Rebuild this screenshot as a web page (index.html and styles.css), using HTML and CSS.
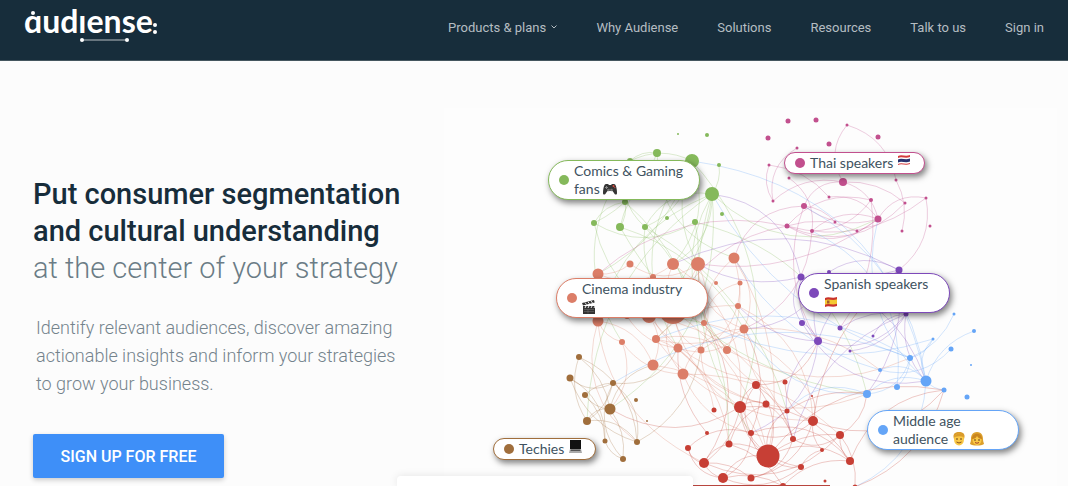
FILE: index.html
```
<!DOCTYPE html>
<html lang="en">

<head>
    <meta charset="UTF-8">
    <meta name="viewport" content="width=device-width, initial-scale=1.0">
    <title>Audiense</title>
    <link rel="stylesheet" href="styles.css">
</head>

<body>
    <header class="header">
        <a class="logo" href="#" aria-label="audiense">
            <svg width="136" height="48" viewBox="0 0 136 48">
                <text class="logo-text" x="0" y="33">ɑudıense</text>
                <circle cx="9" cy="13" r="2" />
                <circle cx="131" cy="25" r="2" />
                <circle cx="131" cy="32" r="2" />
                <path class="logo-line" d="M58 40H103" />
                <circle cx="58" cy="40" r="2" />
                <circle cx="103" cy="40" r="2" />
            </svg>
        </a>
        <nav class="nav">
            <a href="#">Products &amp; plans
                <svg class="chevron" width="6" height="4" viewBox="0 0 6 4"><path d="M.5.5 3 3 5.5.5" /></svg>
            </a>
            <a href="#">Why Audiense</a>
            <a href="#">Solutions</a>
            <a href="#">Resources</a>
            <a href="#">Talk to us</a>
            <a href="#">Sign in</a>
        </nav>
    </header>

    <main class="hero">
        <section class="copy">
            <h1>Put consumer segmentation<br>and cultural understanding<br><span>at the center of your strategy</span></h1>
            <p>Identify relevant audiences, discover amazing<br>actionable insights and inform your strategies<br>to grow your business.</p>
            <button type="button" class="signup">SIGN UP FOR FREE</button>
        </section>

        <section class="graph">
            <svg id="network" class="network" viewBox="444 108 613 378"></svg>

            <div class="tag green comics">
                <span>Comics &amp; Gaming<br>fans
                    <svg class="emoji" viewBox="0 0 14 14">
                        <path fill="#353535" d="M3 2h2l1 1h2l1-1h2c2 0 3 5 3 9 0 2-2 2-3 0L9.500 9h-5L3 11c-1 2-3 2-3 0 0-4 1-9 3-9z" />
                        <path stroke="#888" stroke-width="1" d="M2 5.500h3M3.500 4v3" />
                        <circle cx="5.500" cy="8" r="1.300" fill="#777" /><circle cx="8.500" cy="8" r="1.300" fill="#777" />
                        <circle cx="10.500" cy="4" r="1" fill="#e0483c" /><circle cx="11.800" cy="5.500" r=".8" fill="#a44" />
                    </svg>
                </span>
            </div>
            <div class="tag pink thai">
                <span>Thai speakers
                    <svg class="emoji" viewBox="0 0 14 14">
                        <path fill="#d33a3c" d="M1 2c4-2 7 1 12-1v9c-5 2-8-1-12 1z" />
                        <path fill="#fff" d="M1 4c4-2 7 1 12-1v6c-5 2-8-1-12 1z" />
                        <path fill="#29336f" d="M1 5.500c4-2 7 1 12-1v3c-5 2-8-1-12 1z" />
                    </svg>
                </span>
            </div>
            <div class="tag coral cinema">
                <span>Cinema industry<br>
                    <svg class="emoji" viewBox="0 0 14 14">
                        <path fill="#333" d="M1 6h12v8H1zM0 3l12-3 .7 2.500L1 5.500z" />
                        <path stroke="#eee" stroke-width="1" d="m3 2.500 1.500 2M6 1.800l1.500 2M9 1l1.500 2M3 8l1-2M6 8l1-2M9 8l1-2M12 8l1-2" />
                        <path stroke="#777" stroke-width=".5" d="M2 9.500h10M2 11.500h10M6 9.500v4" />
                    </svg>
                </span>
            </div>
            <div class="tag purple spanish">
                <span>Spanish speakers<br>
                    <svg class="emoji" viewBox="0 0 14 14">
                        <path fill="#c9332c" d="M1 3c4-2 7 1 12-1v9c-5 2-8-1-12 1z" />
                        <path fill="#f4c932" d="M1 5.200c4-2 7 1 12-1v4.600c-5 2-8-1-12 1z" />
                        <path fill="#a55b2b" d="M3 5.500h2.500v3H3z" />
                    </svg>
                </span>
            </div>
            <div class="tag brown techies">
                <span>Techies
                    <svg class="emoji" viewBox="0 0 14 14">
                        <path fill="#111" d="M2 0h11v9H2z" />
                        <path fill="#aaa" d="M2 9h11l1 4H1z" />
                        <path fill="#555" d="M3 9.500h9l.5 1.500h-10z" />
                    </svg>
                </span>
            </div>
            <div class="tag blue middle">
                <span>Middle age<br>audience
                    <svg class="emoji" viewBox="0 0 14 14">
                        <path fill="#d99b2b" d="M2 7C0 1 4 0 7 0s7 1 5 7z" />
                        <ellipse cx="7" cy="7.500" rx="5" ry="6" fill="#fac846" />
                        <path fill="#d99b2b" d="M2.500 5C3 1 11 0 11.500 5 9 4 6 4 2.500 5z" />
                        <circle cx="5" cy="7" r=".8" fill="#54351a" /><circle cx="9" cy="7" r=".8" fill="#54351a" />
                        <path stroke="#8a5420" fill="none" d="M4.500 10q2.500 2 5 0" />
                    </svg>
                    <svg class="emoji second" viewBox="0 0 14 14">
                        <path fill="#dda02c" d="M7 0c5 0 6 4 6 7s1 4 1 5c-3 2-11 2-14 0 0-1 1-2 1-5s1-7 6-7z" />
                        <ellipse cx="7" cy="8" rx="4.500" ry="5" fill="#fac846" />
                        <path fill="#c9851f" d="M2 7c3 0 4-1 5-3 1 2 3 3 5 3C12 0 2 0 2 7z" />
                        <circle cx="5" cy="8" r=".8" fill="#54351a" /><circle cx="9" cy="8" r=".8" fill="#54351a" />
                        <path stroke="#a5432b" fill="none" d="M5 10.500q2 1.500 4 0" />
                    </svg>
                </span>
            </div>
        </section>
    </main>

    <aside class="popup"></aside>

    <script src="graph.js"></script>
</body>

</html>
```
FILE: styles.css
```
/* General */
* {
    box-sizing: border-box;
}

body {
    margin: 0;
    font-family: Roboto, 'Liberation Sans', sans-serif;
    background-color: #fcfcfc;
    color: #172d3b;
}

/* Header */
.header {
    display: flex;
    justify-content: space-between;
    align-items: flex-start;
    height: 61px;
    padding: 0 24px;
    background-color: #172d3b;
    border-bottom: 1px solid #45565f;
}

.logo svg {
    display: block;
    fill: #fff;
}

.logo-text {
    font-family: Lato, sans-serif;
    font-size: 32px;
    font-weight: 700;
}

.logo-line {
    stroke: #b9c0c4;
    stroke-width: 1;
}

.nav {
    display: flex;
    gap: 39px;
    padding-top: 18px;
}

.nav a {
    color: #b5bdc2;
    font-size: 13px;
    line-height: 20px;
    text-decoration: none;
    white-space: nowrap;
}

.chevron {
    margin-left: 2px;
    vertical-align: 3px;
    fill: none;
    stroke: #b5bdc2;
}

/* Hero */
.hero {
    display: grid;
    grid-template-columns: 444px 1fr;
    padding-top: 47px;
}

.copy {
    padding: 68px 0 0 33px;
}

h1 {
    margin: 0;
    font-size: 29px;
    font-weight: 500;
    line-height: 37px;
    white-space: nowrap;
}

h1 span {
    color: #6b7c86;
    font-weight: 300;
}

.copy p {
    margin: 27px 0 36px 3px;
    color: #74838c;
    font-size: 18px;
    font-weight: 300;
    line-height: 28px;
    white-space: nowrap;
}

.signup {
    display: block;
    width: 191px;
    height: 44px;
    padding: 0;
    background-color: #3e8ff8;
    color: #fff;
    border: none;
    border-radius: 2px;
    box-shadow: 0 2px 5px rgba(0, 0, 0, 0.2);
    cursor: pointer;
    font-family: inherit;
    font-size: 16px;
    font-weight: 500;
}

/* Network graph */
.graph {
    position: relative;
}

.network {
    display: block;
    width: 613px;
    height: 378px;
    background-color: #fdfdfd;
}

.tag {
    --color: #85b95b;
    position: absolute;
    display: flex;
    align-items: center;
    gap: 5px;
    width: 152px;
    padding: 1px 0 1px 10px;
    background-color: #fff;
    border: 1px solid var(--color);
    border-radius: 20px;
    box-shadow: 2px 3px 6px rgba(0, 0, 0, 0.5);
    color: #405260;
    font-family: Lato, sans-serif;
    font-size: 14px;
    line-height: 18px;
    white-space: nowrap;
}

.tag::before {
    content: "";
    width: 10px;
    height: 10px;
    border-radius: 50%;
    background-color: var(--color);
    flex: none;
}

.emoji {
    width: 14px;
    height: 14px;
    vertical-align: -2px;
    fill: none;
}

.second {
    margin-left: 1px;
}

.pink { --color: #c2508e; }
.coral { --color: #dc7e68; }
.purple { --color: #7d49ba; }
.brown { --color: #a06e3c; }
.blue { --color: #65a5f7; }

.comics { left: 104px; top: 52px; }
.thai { left: 340px; top: 44px; width: 141px; }
.cinema { left: 112px; top: 170px; }
.spanish { left: 354px; top: 165px; }
.techies { left: 49px; top: 330px; width: 103px; }
.middle { left: 423px; top: 302px; }

.thai .emoji,
.techies .emoji {
    vertical-align: 0;
}

.popup {
    position: fixed;
    left: 397px;
    bottom: 0;
    width: 296px;
    height: 10px;
    background-color: #fff;
    border-radius: 4px 4px 0 0;
    box-shadow: 0 0 8px rgba(0, 0, 0, 0.1);
}
```
FILE: graph.js
```
const groups = {
    g: { color: "#85b95b", nodes: [[678,134,1],[707,135,2],[657,153,4],[692,161,7],[630,161,3],[719,165,2],[712,194,7],[722,214,2],[695,222,3],[667,218,2],[645,227,3],[620,227,4],[594,223,3],[625,202,3]] },
    p: { color: "#c2508e", nodes: [[788,121,2.5],[816,120,2.5],[847,125,1.5],[768,138,2.5],[829,144,2.5],[878,137,2.5],[797,148,1.5],[769,165,1.5],[789,178,1.5],[773,201,1.5],[843,182,4],[896,180,1.5],[804,206,3],[829,197,1.5],[871,200,2],[905,203,1.5],[926,198,1.5],[878,219,3.5],[787,226,2.5],[812,231,2],[835,222,1.5],[857,231,1.5],[902,231,1.5],[930,226,1.5]] },
    c: { color: "#dc7e68", nodes: [[630,264,3.5],[673,264,6],[698,264,7],[734,258,5.5],[598,274,5.5],[653,277,3],[716,283,2],[740,283,2.5],[738,306,3],[744,329,4.5],[598,321,5.5],[627,316,3],[649,316,7],[673,310,14],[704,323,3],[622,342,3],[656,339,4],[678,348,4.5],[701,350,3.5],[727,350,4],[653,365,5.5],[683,374,5.5]] },
    v: { color: "#7d49ba", nodes: [[801,277,3.5],[829,272,2],[899,270,3.5],[802,323,3],[818,341,4],[840,328,2.5],[873,336,1.5],[850,351,1.5],[906,314,2.5]] },
    b: { color: "#65a5f7", nodes: [[954,314,1.5],[974,331,2],[933,339,1.5],[951,349,2.5],[971,365,1],[910,358,3],[880,370,2],[897,387,3],[926,381,5.5],[867,394,4],[944,390,2.5],[967,397,2.5]] },
    t: { color: "#a06e3c", nodes: [[579,357,3],[570,378,3.5],[613,383,3],[585,395,3],[610,409,5.5],[587,421,4],[636,400,2],[647,421,1],[605,441,2.5],[637,442,3],[623,459,3]] },
    r: { color: "#c73f35", nodes: [[756,385,4],[785,382,2.5],[740,407,6],[766,404,3.5],[787,411,2.5],[813,421,5],[714,410,2.5],[812,396,1],[707,433,2],[751,433,3],[729,444,3.5],[688,448,3],[704,463,5],[768,456,11.5],[793,439,3],[840,435,4],[822,450,2],[850,461,4],[801,467,3],[723,478,5],[751,478,3.5],[825,481,1.5],[783,486,3],[855,487,2.5]] },
};

// "from to", the line takes the colour of the first node
const links = `
g2 g4,g2 g12,g3 g11,g3 g10,g3 g4,g5 g6,g6 g10,g8 g12,g13 g12,g13 g11,g4 g10,
g3 c1,g3 c2,g3 c4,g3 c17,g6 c1,g6 c10,g6 c12,g6 c19,g8 c16,g10 c13,g11 c9,g12 c14,g6 t4,g6 t5,g13 c18,g2 c3,g3 r2,g6 r9,g10 r10,g4 c15,g8 b9,g11 b9,g10 r4,
p2 p10,p2 p11,p7 p9,p7 p13,p6 p9,p8 p19,p10 p9,p10 p15,p10 p12,p13 p17,p12 p17,p12 p20,p18 p17,p18 p14,p18 p16,p18 p21,p18 p15,p19 p17,p19 p14,p11 p22,p16 p17,p10 p17,
p18 c4,p17 c2,p12 c3,p16 v2,p12 v4,p14 v5,g6 p17,p19 c9,p18 c13,
c0 c4,c0 c2,c1 c4,c1 c13,c2 c12,c2 c9,c3 c9,c3 c14,c3 c19,c5 c17,c7 c18,c8 c16,c9 c16,c9 c21,c10 c20,c10 c15,c13 c19,c13 c21,c12 c20,c15 c21,c16 c19,c17 c9,c18 c13,c11 c17,c2 c18,c7 c14,
c1 r2,c2 r0,c3 r13,c4 r12,c8 r5,c9 r4,c13 r13,c13 r3,c12 r14,c16 r5,c17 r10,c18 r2,c20 r13,c21 r9,c21 r15,c10 t9,c15 t4,c19 b5,c9 b6,c17 b9,c16 r6,c12 r1,c14 r7,
v0 v2,v1 v2,v0 v4,v3 v4,v4 v8,v4 v2,v7 v8,v5 v8,v0 v3,v6 v8,v1 v4,
v0 c2,v0 g6,v1 c9,v2 c1,v4 c8,v4 r14,v4 r9,v8 b8,v2 b9,v3 b8,v0 b8,v8 r14,
b0 b5,b2 b8,b3 b6,b1 b8,b5 b7,b8 b6,b9 b8,b5 b2,b10 b8,b9 b5,
b8 p17,b8 p12,b5 g6,b8 g3,b9 c9,b5 c16,b6 c3,b9 r4,b8 r23,b5 t2,b2 c14,b7 p19,
t0 t9,t0 t5,t0 t4,t1 t2,t1 t8,t1 t9,t2 t5,t2 t10,t2 t9,t3 t4,t3 t8,t4 t5,t5 t9,t8 t10,t4 t10,t2 c17,t4 c20,t9 c18,t3 t2,
r0 r9,r0 r13,r0 r2,r0 r14,r1 r5,r2 r3,r2 r13,r2 r12,r2 r18,r2 r17,r3 r10,r3 r14,r4 r13,r5 r9,r5 r16,r7 r5,r9 r13,r9 r19,r10 r12,r10 r13,r11 r19,r11 r9,r12 r19,r12 r20,r12 r15,r13 r17,r13 r18,r13 r15,r14 r15,r14 r20,r15 r17,r15 r23,r17 r9,r18 r19,r16 r18,r19 r22,r13 r19,r5 r20,r17 r22,r10 r22,r11 r12,
r13 b10,r15 b9,r4 b9,r5 b10,r17 b10,r23 b10,r8 c17,r12 c14,r2 t4,r9 c9,r5 v2,r0 v4`;

const svg = document.getElementById("network");

function add(name, attrs) {
    const el = document.createElementNS("http://www.w3.org/2000/svg", name);
    for (const key in attrs) {
        el.setAttribute(key, attrs[key]);
    }
    svg.appendChild(el);
}

function node(id) {
    return groups[id[0]].nodes[id.slice(1)];
}

links.trim().split(/,\s*/).forEach((link, i) => {
    const [from, to] = link.trim().split(" ");
    const [x1, y1] = node(from);
    const [x2, y2] = node(to);
    // alternate the side and depth of the curve
    const bend = [0.25, -0.2, 0.35, -0.3][i % 4];
    const cx = (x1 + x2) / 2 - (y2 - y1) * bend;
    const cy = (y1 + y2) / 2 + (x2 - x1) * bend;
    add("path", {
        d: `M${x1} ${y1}Q${cx} ${cy} ${x2} ${y2}`,
        fill: "none",
        stroke: groups[from[0]].color,
        "stroke-opacity": 0.28,
    });
});

for (const id in groups) {
    groups[id].nodes.forEach(([cx, cy, r]) => add("circle", { cx, cy, r, fill: groups[id].color }));
}

// top edge of the next band
add("path", { d: "M693 485.500H830", stroke: "#b8453e" });
```
